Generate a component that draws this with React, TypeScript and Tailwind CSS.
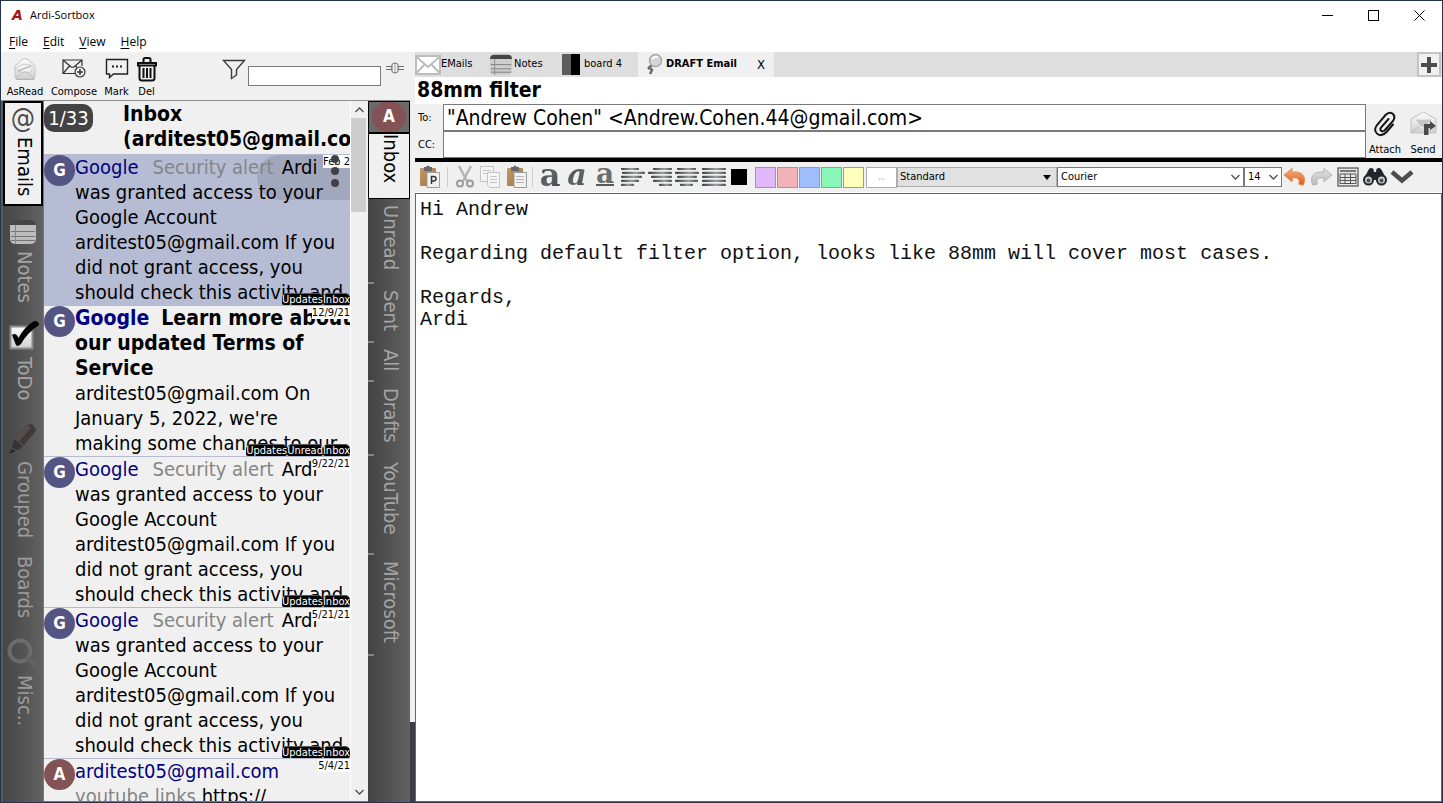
import React from "react";

const UI = "font-['DejaVu_Sans_Condensed','DejaVu_Sans',sans-serif]";

const SvgDefs = () => (
  <svg width="0" height="0" className="absolute" aria-hidden="true">
    <defs>
      <linearGradient id="paper" x1="0" y1="0" x2="0" y2="1">
        <stop offset="0" stopColor="#fdfdfd" />
        <stop offset="1" stopColor="#cfcfcf" />
      </linearGradient>
      <linearGradient id="bar" x1="0" y1="0" x2="1" y2="0">
        <stop offset="0" stopColor="#3c3f3f" />
        <stop offset="0.6" stopColor="#9da0a0" />
        <stop offset="1" stopColor="#4c4f4f" />
      </linearGradient>
      <linearGradient id="wood" x1="0" y1="0" x2="1" y2="1">
        <stop offset="0" stopColor="#c59a62" />
        <stop offset="1" stopColor="#9c7440" />
      </linearGradient>
      <linearGradient id="undo" x1="0" y1="0" x2="0" y2="1">
        <stop offset="0" stopColor="#f6b27a" />
        <stop offset="1" stopColor="#dd5a1c" />
      </linearGradient>
      <linearGradient id="redo" x1="0" y1="0" x2="0" y2="1">
        <stop offset="0" stopColor="#e2e2e2" />
        <stop offset="1" stopColor="#b9b9b9" />
      </linearGradient>
    </defs>
  </svg>
);

const AsReadIcon = () => (
  <svg width="24" height="24" viewBox="0 0 24 24" fill="none">
    <path d="M2 9 L9 2.500 Q12 1 15 2.500 L22 9 V20 Q22 22 20 22 H4 Q2 22 2 20Z" fill="url(#paper)" stroke="#c4c4c4" />
    <path d="M4.500 10 Q12 5 19.500 9 L18 15 Q12 17 5 14Z" fill="#f2f2f2" stroke="#cfcfcf" />
    <path d="M5 14 Q10 12 18 9" stroke="#bdbdbd" strokeWidth="1.500" />
    <path d="M3 21 L9 15.500 Q12 14 15 15.500 L21 21" stroke="#bcbcbc" />
    <path d="M3 22.500 H21" stroke="#b4b4b4" />
  </svg>
);

const ComposeIcon = () => (
  <svg width="24" height="24" viewBox="0 0 24 24" fill="none" stroke="#333" strokeWidth="1.200">
    <path d="M14 16.500 H1 V3 H20 V9" />
    <path d="M1 3 L8.500 9.500 Q10.500 11 12.500 9.500 L20 3 M1 16.500 L7.500 9 M13.500 9 L15 10.500" />
    <circle cx="18" cy="15" r="5" />
    <path d="M18 12 V18 M15 15 H21" strokeWidth="1.500" />
  </svg>
);

const MarkIcon = () => (
  <svg width="24" height="24" viewBox="0 0 24 24" fill="none" stroke="#1f1f1f" strokeWidth="1.400">
    <path d="M1.500 2.500 H22.500 V17 H8.500 L4.500 20.500 V17 H1.500Z" />
    <path d="M7 9.500 h2 M11 9.500 h2 M15 9.500 h2" strokeWidth="2" />
  </svg>
);

const TrashIcon = () => (
  <svg width="22" height="26" viewBox="0 0 22 26" fill="none" stroke="#111">
    <path d="M2 7 H20 V9.500 H2Z M3.500 9.500 V22 Q3.500 24.500 6 24.500 H16 Q18.500 24.500 18.500 22 V9.500" strokeWidth="2" />
    <path d="M7.500 6 V3.500 Q7.500 2 9 2 H13 Q14.500 2 14.500 3.500 V6" strokeWidth="2" />
    <path d="M7.500 12 V22 M11 12 V22 M14.500 12 V22" strokeWidth="2" />
  </svg>
);

const FunnelIcon = () => (
  <svg width="24" height="21" viewBox="0 0 24 21" fill="none" stroke="#3a3a3a" strokeWidth="1.400">
    <path d="M1.500 1.500 H22.500 L14.500 10.500 V16 L9.500 19.500 V10.500Z" />
  </svg>
);

const SliderIcon = () => (
  <svg width="18" height="12" viewBox="0 0 18 12" fill="none" stroke="#6e6e6e">
    <path d="M0 4.500 H6 V7.500 H0 M18 4.500 H12 V7.500 H18" />
    <rect x="6" y="1.500" width="6" height="9" rx="1.500" fill="#f4f4f4" />
    <path d="M9 0 V12" stroke="#999" />
  </svg>
);

const NotesIcon = ({ dim = false }: { dim?: boolean }) => (
  <svg width={dim ? 26 : 22} height={dim ? 26 : 22} viewBox="0 0 26 26" fill="none">
    <rect x="0" y="1" width="26" height="24" rx="5" fill={dim ? "#bcbcbc" : "#cdcdcd"} />
    <path d="M0 6 Q0 1 5 1 H21 Q26 1 26 6Z" fill="#454545" />
    <path d="M1 12.500 H25 M1 17.500 H25 M1 21.500 H25" stroke="#757575" />
    <path d="M5.500 6 V25" stroke="#858585" />
  </svg>
);

const TodoIcon = () => (
  <svg width="32" height="30" viewBox="0 0 32 30" fill="none">
    <rect x="3.500" y="5.500" width="22" height="22" fill="url(#paper)" stroke="#8b8b8b" strokeWidth="2" />
    <path d="M5 14 Q9 11 11.500 17 Q17 6 27 0 Q32 0 32 4 Q20 12 14 23 Q10 27 8.500 23Z" fill="#050505" />
  </svg>
);

const MarkerIcon = () => (
  <svg width="28" height="32" viewBox="0 0 28 32">
    <path d="M18 2 L23 1 L27 6 L26 9 L15 22 L6 15Z" fill="#3f3a39" />
    <path d="M5 16 L14 23 L9 27 L3 25Z" fill="#393433" />
    <path d="M2.500 26 L7 28 L0 31Z" fill="#2c2827" />
    <path d="M18 2 L22 5 L10 18 L6 15Z" fill="#544e4c" />
  </svg>
);

const MiscIcon = () => (
  <svg width="32" height="32" viewBox="0 0 32 32" fill="none">
    <circle cx="13" cy="14" r="10.500" stroke="#6b6b6b" strokeWidth="4" />
    <path d="M20 21 L30 30" stroke="#626262" strokeWidth="5" />
  </svg>
);

const EnvelopeIcon = () => (
  <svg width="26" height="20" viewBox="0 0 26 20" fill="#fff" stroke="#bcbcbc" strokeWidth="2">
    <rect x="1" y="1" width="24" height="18" />
    <path d="M1 1.500 L13 12 L25 1.500 M1 18.500 L9.500 9.500 M25 18.500 L16.500 9.500" fill="none" />
  </svg>
);

const MagnifierIcon = () => (
  <svg width="18" height="24" viewBox="0 0 18 24" fill="none">
    <path d="M6.500 11.500 L2 15.500 Q5 14.500 6 17 L4 21" stroke="#6c6c6c" strokeWidth="2.500" />
    <circle cx="9.500" cy="7.500" r="6" fill="#d6d6d6" stroke="#a8a8a8" strokeWidth="1.500" />
    <path d="M6 6 Q8 3 12 4" stroke="#fff" strokeWidth="2" />
  </svg>
);

const ClipIcon = () => (
  <svg width="24" height="26" viewBox="0 0 24 26" fill="none" stroke="#151515" strokeWidth="2" strokeLinecap="round">
    <path d="M15.500 8 L8 16.500 Q6.500 19 8.500 20 Q10.500 21 12 19 L20 10 Q23 5.500 19.500 2.500 Q16 0.500 12.500 4 L4 14 Q0 19.500 4.500 23 Q9 26 13.500 21 L20 13.500" />
  </svg>
);

const SendIcon = () => (
  <svg width="27" height="26" viewBox="0 0 27 26" fill="none">
    <path d="M1 8 L13.500 1 L26 8 V22 H1Z" fill="url(#paper)" stroke="#c2c2c2" />
    <path d="M4 8 H23 L16 16 Q13.500 18 11 16Z" fill="#c6c6c6" stroke="#f5f5f5" />
    <path d="M1 22 L10 14.500" stroke="#bdbdbd" />
    <path d="M14 24 V13 H20 V10 L26 15 L20 19 V17 H18.500 V24Z" fill="#4a4a4a" />
  </svg>
);

const PasteIcon = ({ letter = false }: { letter?: boolean }) => (
  <svg width="22" height="24" viewBox="0 0 22 24">
    <rect x="1" y="3" width="16" height="18" rx="1" fill="url(#wood)" />
    <path d="M5 2 H7 Q9 -1 11 2 H13 V6 H5Z" fill="#68686a" />
    <path d="M8 7.500 H20.500 V22.500 H8Z" fill="#f1f1f1" stroke="#9d9d9d" />
    {letter ? (
      <path d="M12.500 19 V11.500 H14.500 Q17 11.500 17 13.700 Q17 16 14.500 16 H12.500" fill="none" stroke="#303030" strokeWidth="1.500" />
    ) : (
      <path d="M10 11.500 H18 M10 14.500 H18 M10 17.500 H18" stroke="#b5b5b5" />
    )}
  </svg>
);

const CutIcon = () => (
  <svg width="18" height="24" viewBox="0 0 18 24" fill="none">
    <path d="M3 1 L11 16 M15 1 L7 16" stroke="#b4b4b4" strokeWidth="2.500" />
    <circle cx="4" cy="18.500" r="3" stroke="#9c9c9c" strokeWidth="2" />
    <circle cx="14" cy="18.500" r="3" stroke="#9c9c9c" strokeWidth="2" />
  </svg>
);

const CopyIcon = () => (
  <svg width="22" height="24" viewBox="0 0 22 24" fill="#f4f4f4" stroke="#c4c4c4">
    <rect x="1.500" y="1.500" width="13" height="15" />
    <path d="M4 5.500 H12 M4 8.500 H12" />
    <path d="M8.500 7.500 H20.500 V22.500 H11 L8.500 20Z" />
    <path d="M11 11.500 H18 M11 14.500 H18 M11 17.500 H18" />
  </svg>
);

const AlignIcon = ({ rows }: { rows: number[][] }) => (
  <svg width="24" height="18" viewBox="0 0 24 18">
    {rows.map(([x, w], i) => (
      <rect key={i} x={x} y={i * 4 - 0.25} width={w} height="2.300" rx="1" fill="url(#bar)" />
    ))}
  </svg>
);

const ArrowIcon = ({ flip = false }: { flip?: boolean }) => (
  <svg width="23" height="20" viewBox="0 0 24 20">
    <path
      transform={flip ? "translate(24 0) scale(-1 1)" : undefined}
      d="M1 8 L9.500 1 V5 Q19 3.500 22 10 Q23.500 15 21 18.500 L16.500 17.500 Q18 12 14 11 Q12 10.500 9.500 11 V15Z"
      fill={flip ? "url(#redo)" : "url(#undo)"}
      stroke={flip ? "#b4b4b4" : "#e08a55"}
    />
  </svg>
);

const TableIcon = () => (
  <svg width="22" height="20" viewBox="0 0 22 20" fill="none">
    <rect x="1" y="1" width="20" height="18" fill="#e6e6e6" stroke="#6e6e6e" strokeWidth="1.500" />
    <path d="M3 4 H19" stroke="#555" strokeWidth="1.500" />
    <path d="M3 7 H19 V16.500 H3Z M3 10.500 H19 M3 13.500 H19 M8 7 V16.500 M13.500 7 V16.500" stroke="#555" />
  </svg>
);

const BinocularsIcon = () => (
  <svg width="26" height="20" viewBox="0 0 26 20">
    <path d="M7 2 Q9 0 11.500 2 L12 5 H14 L14.500 2 Q17 0 19 2 L24.500 12 H1.500Z" fill="#22262a" />
    <circle cx="6.500" cy="13" r="5.500" fill="#22262a" />
    <circle cx="19.500" cy="13" r="5.500" fill="#22262a" />
    <circle cx="6.500" cy="13" r="3.500" fill="#c9cdd0" />
    <circle cx="19.500" cy="13" r="3.500" fill="#c9cdd0" />
    <circle cx="6.500" cy="13.500" r="2" fill="#4b5054" />
    <circle cx="19.500" cy="13.500" r="2" fill="#4b5054" />
    <rect x="10" y="7" width="6" height="6" fill="#22262a" />
  </svg>
);

const ThickChevron = () => (
  <svg width="24" height="14" viewBox="0 0 24 14" fill="none" stroke="#4d4d4d" strokeWidth="4.500">
    <path d="M2 2 L12 10.500 L22 2" />
  </svg>
);

const ThinChevron = ({ up = false }: { up?: boolean }) => (
  <svg width="9" height="6" viewBox="0 0 9 6" fill="none" stroke="#4f4f4f" strokeWidth="1.300">
    <path d={up ? "M0.500 5 L4.500 1 L8.500 5" : "M0.500 1 L4.500 5 L8.500 1"} />
  </svg>
);

const TitleBar = () => (
  <header className="bg-white font-['Open_Sans','Noto_Sans',sans-serif] text-xs text-black">
    <div className="flex h-[29px] items-center">
      <span className="w-[29px] pl-[11px] font-['DejaVu_Sans',sans-serif] text-[14px] font-bold italic text-[#a81414]">A</span>
      <h1 className="flex-1 text-[11px]">Ardi-Sortbox</h1>
      <button aria-label="Minimize" className="flex w-[46px] justify-center">
        <svg width="11" height="11" stroke="#000"><path d="M0 5.500 H11" /></svg>
      </button>
      <button aria-label="Maximize" className="flex w-[46px] justify-center">
        <svg width="11" height="11" stroke="#000" fill="none"><rect x="0.500" y="0.500" width="10" height="10" /></svg>
      </button>
      <button aria-label="Close" className="flex w-[46px] justify-center">
        <svg width="11" height="11" stroke="#000"><path d="M0.500 0.500 L10.500 10.500 M10.500 0.500 L0.500 10.500" /></svg>
      </button>
    </div>
    <nav className="flex h-[22px] items-center gap-[15px] pl-2 pt-0.5 text-xs">
      {["File", "Edit", "View", "Help"].map((m) => (
        <button key={m}>
          <span className="underline underline-offset-2">{m[0]}</span>
          {m.slice(1)}
        </button>
      ))}
    </nav>
  </header>
);

const ToolButton = ({ label, children, className }: { label: string; children: React.ReactNode; className: string }) => (
  <button className={`flex flex-col items-center text-[11px] leading-[18px] ${className}`}>
    <span className="flex h-7 items-center">{children}</span>
    {label}
  </button>
);

const LeftToolbar = () => (
  <div className="flex h-[49px] items-start border-b border-[#8b8b8b] bg-[#f0f0f0] pt-[3px]">
    <ToolButton label="AsRead" className="w-[48px]"><AsReadIcon /></ToolButton>
    <ToolButton label="Compose" className="w-[50px]"><ComposeIcon /></ToolButton>
    <ToolButton label="Mark" className="w-[35px]"><MarkIcon /></ToolButton>
    <ToolButton label="Del" className="w-[25px]"><TrashIcon /></ToolButton>
    <div className="flex flex-1 items-start justify-end pt-1">
      <FunnelIcon />
      <input aria-label="Filter messages" className="ml-0.5 mt-[7px] h-5 w-[133px] border border-[#7a7a7a] bg-white px-1 text-[11px]" />
      <button aria-label="Filter options" className="ml-[5px] mr-1.5 mt-[3px]"><SliderIcon /></button>
    </div>
  </div>
);

const SIDE = [
  { label: "Notes", icon: <NotesIcon dim />, cls: "h-[106px] pt-[13px] text-[#a5a5a5]" },
  { label: "ToDo", icon: <TodoIcon />, cls: "h-[108px] pt-[9px] text-[#a5a5a5]" },
  { label: "Grouped", icon: <MarkerIcon />, cls: "h-[126px] pt-[3px] text-[#9c9c9c]" },
  { label: "Boards", icon: null, cls: "h-[86px] pt-[10px] text-[#9c9c9c]" },
  { label: "Misc..", icon: <MiscIcon />, cls: "h-[110px] pt-[5px] text-[#9c9c9c]" },
];

const SideNav = () => (
  <nav className="flex w-[42px] shrink-0 flex-col border-l-2 border-[#5a5a5a] bg-linear-to-r from-[#454545] to-[#626262] text-[20px]">
    <button className="flex h-[105px] flex-col items-center border-2 border-black bg-[#f0f0f0] text-black">
      <span className="text-[27px] leading-[30px] text-[#4a4a4a]">@</span>
      <span className="ml-1 mt-1 leading-6 [writing-mode:vertical-rl]">Emails</span>
    </button>
    {SIDE.map((s) => (
      <button key={s.label} className={`flex shrink-0 flex-col items-center gap-1.5 ${s.cls}`}>
        {s.icon}
        <span className="ml-1 leading-6 [writing-mode:vertical-rl]">{s.label}</span>
      </button>
    ))}
  </nav>
);

const FOLDERS = [
  { label: "Unread", cls: "h-[85px]" },
  { label: "Sent", cls: "h-[59px]" },
  { label: "All", cls: "h-[39px]" },
  { label: "Drafts", cls: "h-[74px]" },
  { label: "YouTube", cls: "h-[99px]" },
  { label: "Microsoft", cls: "h-[101px]" },
];

const FolderTabs = () => (
  <nav className="flex w-[42px] shrink-0 flex-col bg-linear-to-r from-[#434343] to-[#626262] text-[20px] text-[#a5a5a5]">
    <button aria-label="Account A" className="flex h-8 items-center justify-center border border-black bg-[#6b6b6b]">
      <span className="flex h-[30px] w-[34px] items-center justify-center rounded-full bg-[#835254] text-[17px] font-bold text-white">A</span>
    </button>
    <button className="flex h-[66px] items-start justify-center border border-black bg-[#f0f0f0] pl-1 text-black">
      <span className="leading-6 [writing-mode:vertical-rl]">Inbox</span>
    </button>
    {FOLDERS.map((f) => (
      <button key={f.label} className={`flex shrink-0 flex-col ${f.cls}`}>
        <span className="ml-1 flex-1 self-center pt-[6px] text-left leading-6 [writing-mode:vertical-rl]">{f.label}</span>
        <span className="h-0.5 w-1.5 bg-[#858585]" />
      </button>
    ))}
  </nav>
);

interface Mail {
  initial: string;
  sender: string;
  subject: string;
  lines: React.ReactNode[];
  date: string;
  tags: string[];
  unread?: boolean;
  selected?: boolean;
}

const ALERT_LINES = [
  "was granted access to your",
  "Google Account",
  "arditest05@gmail.com If you",
  "did not grant access, you",
  "should check this activity and",
];

const alertMail = (date: string, selected = false): Mail => ({
  initial: "G", sender: "Google", subject: "Security alert", lines: ["Ardi", ...ALERT_LINES], date, tags: ["Updates", "Inbox"], selected,
});

const Strong = ({ children }: { children: React.ReactNode }) => <b className="text-[21px] leading-none">{children}</b>;

const MAILS: Mail[] = [
  alertMail("Feb 2", true),
  {
    initial: "G", sender: "Google", subject: "", date: "12/9/21", tags: ["Updates", "Unread", "Inbox"], unread: true,
    lines: [
      <Strong>Learn more about</Strong>, <Strong>our updated Terms of</Strong>, <Strong>Service</Strong>,
      "arditest05@gmail.com On", "January 5, 2022, we're", "making some changes to our",
    ],
  },
  alertMail("9/22/21"),
  alertMail("5/21/21"),
];

const Avatar = ({ letter, cls }: { letter: string; cls: string }) => (
  <span className={`flex h-[31px] w-[31px] shrink-0 items-center justify-center rounded-full text-[17px] font-bold text-white ${cls}`}>{letter}</span>
);

const DateLabel = ({ children }: { children: React.ReactNode }) => (
  <time className="absolute right-0 top-0 bg-white text-[11px] leading-[13px] text-black">{children}</time>
);

const MailRow = ({ mail }: { mail: Mail }) => (
  <li className={`relative flex h-[151px] shrink-0 border-t border-[#b5bbd1] ${mail.selected ? "bg-[#b5bcd3]" : ""}`}>
    {mail.selected && <span className="absolute right-0 top-0 h-[45px] w-[93px] rounded-l-full bg-[#a1a8be]" />}
    <Avatar letter={mail.initial} cls="bg-[#555584]" />
    <p className="relative whitespace-nowrap">
      <span className={`text-[#000080] ${mail.unread ? "text-[21px] font-bold leading-none" : ""}`}>{mail.sender}</span>
      {mail.subject && <span className="pl-3.5 text-[#858585]">{mail.subject}</span>}
      <span className={mail.subject ? "pl-2" : "pl-3"}>{mail.lines[0]}</span>
      {mail.lines.slice(1).map((l, i) => (
        <span key={i} className="block">{l}</span>
      ))}
    </p>
    <DateLabel>{mail.date}</DateLabel>
    {mail.selected && (
      <button aria-label="Message actions" className="absolute right-[11px] top-0 flex flex-col gap-1">
        <i className="h-2 w-2 rounded-full bg-[#404045]" />
        <i className="h-2 w-2 rounded-full bg-[#404045]" />
        <i className="h-2 w-2 rounded-full bg-[#404045]" />
      </button>
    )}
    <span className="absolute bottom-0 right-0 flex text-[11px] leading-[11px] text-white">
      {mail.tags.map((t) => (
        <span key={t} className="rounded-t-[5px] rounded-b-[2px] border-t border-[#555] bg-black">{t}</span>
      ))}
    </span>
  </li>
);

const MessageList = () => (
  <section className="flex min-w-0 flex-1 overflow-hidden border-b border-l border-[#777] bg-[#f0f0f0]">
    <div className="flex min-w-0 flex-1 flex-col overflow-hidden text-[20px] leading-[25px] text-black">
      <div className="flex h-[53px] shrink-0 items-start">
        <span className="mt-[3px] flex h-7 w-[49px] shrink-0 items-center justify-center rounded-[10px] bg-[#434343] text-white">1/33</span>
        <h2 className="ml-[30px] mt-px whitespace-nowrap text-[21px] font-bold">
          Inbox
          <br />
          (arditest05@gmail.co
        </h2>
      </div>
      <ul className="flex flex-col">
        {MAILS.map((m) => (
          <MailRow key={m.date} mail={m} />
        ))}
        <li className="relative flex shrink-0 border-t border-[#b5bbd1]">
          <Avatar letter="A" cls="bg-[#835254]" />
          <p className="whitespace-nowrap">
            <span className="text-[#000080]">arditest05@gmail.com</span>
            <br />
            <span className="text-[#858585]">youtube links</span> https://
          </p>
          <DateLabel>5/4/21</DateLabel>
        </li>
      </ul>
    </div>
    <div className="flex w-[18px] shrink-0 flex-col items-center justify-between border-l border-white bg-[#f0f0f0] pb-1.5">
      <div className="flex w-full flex-col items-center">
        <span className="flex h-[17px] items-center"><ThinChevron up /></span>
        <span className="h-[94px] w-[15px] self-start bg-[#cdcdcd]" />
      </div>
      <ThinChevron />
    </div>
  </section>
);

const TabStrip = () => (
  <div className="flex h-[25px] items-stretch bg-[#dedede] text-[11px] text-black">
    <button className="flex w-[75px] items-center"><EnvelopeIcon />EMails</button>
    <button className="flex w-[72px] items-center gap-0.5"><NotesIcon />Notes</button>
    <button className="flex w-[76px] items-center gap-1">
      <svg width="18" height="21"><rect width="9" height="21" fill="#5c5c5c" /><rect x="9" width="9" height="21" fill="#000" /></svg>
      board 4
    </button>
    <div className="flex w-[136px] items-center bg-[#f0f0f0] pl-2">
      <button className="flex flex-1 items-center gap-0.5 font-bold"><MagnifierIcon />DRAFT Email</button>
      <button aria-label="Close tab" className="mr-[9px] text-[13px]">X</button>
    </div>
    <button aria-label="New tab" className="ml-auto mr-px flex w-6 items-center justify-center border-2 border-[#c4c4c4] bg-[#f0f0f0]">
      <svg width="16" height="16" stroke="#4d4d4d" strokeWidth="4"><path d="M8 0 V16 M0 8 H16" /></svg>
    </button>
  </div>
);

const Recipients = () => (
  <div className="flex h-[54px] bg-[#f0f0f0] text-[11px]">
    <div className="flex flex-1 flex-col">
      <label className="flex h-[27px] items-center">
        <span className="w-7 pl-[3px] pt-0.5">To:</span>
        <input
          defaultValue={'"Andrew Cohen" <Andrew.Cohen.44@gmail.com>'}
          className="h-full flex-1 border border-[#7a7a7a] bg-white px-[3px] text-[21px] outline-none"
        />
      </label>
      <label className="flex h-[27px] items-center">
        <span className="w-7 pl-[3px] pt-0.5">CC:</span>
        <input className="h-full flex-1 border border-[#7a7a7a] bg-white px-[3px] text-[21px] outline-none" />
      </label>
    </div>
    <button className="flex w-[38px] flex-col items-center justify-between pt-[7px]">
      <ClipIcon />Attach
    </button>
    <button className="flex w-[38px] flex-col items-center justify-between pt-[7px]">
      <SendIcon />Send
    </button>
  </div>
);

const Glyph = ({ label, cls }: { label: string; cls: string }) => (
  <button
    aria-label={label}
    className={`flex h-[30px] items-center justify-center bg-linear-to-br from-[#2f3434] via-[#5f6464] to-[#3b4040] bg-clip-text pb-1 font-['DejaVu_Serif',serif] font-bold leading-[26px] text-transparent ${cls}`}
  >
    a
  </button>
);

const SWATCHES = ["bg-[#e1b9fb]", "bg-[#f1b3b8]", "bg-[#9fbdfd]", "bg-[#89f5b6]", "bg-[#ffffbd]"];
const ALIGNS = [
  { label: "Align left", rows: [[0, 18], [1, 23], [0, 21], [0, 18], [0, 13]] },
  { label: "Align right", rows: [[5, 19], [0, 24], [3, 21], [5, 19], [11, 13]] },
  { label: "Align center", rows: [[2, 19], [0, 24], [2, 20], [0, 23], [5, 13]] },
  { label: "Justify", rows: [[0, 24], [0, 24], [0, 24], [0, 24], [0, 24]] },
];

const FormatBar = () => (
  <div className="flex h-[30px] items-center bg-[#f0f0f0] pl-1 text-[11px]">
    <button aria-label="Paste plain"><PasteIcon letter /></button>
    <span className="ml-1.5 h-5 w-px bg-[#cfcfcf]" />
    <div className="ml-2 flex items-center gap-[5px]">
      <button aria-label="Cut"><CutIcon /></button>
      <button aria-label="Copy"><CopyIcon /></button>
      <button aria-label="Paste"><PasteIcon /></button>
    </div>
    <span className="ml-1 h-5 w-px bg-[#cfcfcf]" />
    <div className="ml-1.5 flex items-center">
      <Glyph label="Bold" cls="w-[22px] text-[32px]" />
      <Glyph label="Italic" cls="w-8 text-[30px] italic" />
      <button aria-label="Underline" className="flex h-[26px] w-6 flex-col items-center justify-end pb-1 font-['DejaVu_Serif',serif] text-[28px] font-bold leading-[20px] text-[#6a6f6f]">
        a
        <span className="h-0.5 w-[18px] shrink-0 bg-[#555a5a]" />
      </button>
    </div>
    <div className="ml-1 flex items-center gap-[3px]">
      {ALIGNS.map((a) => (
        <button key={a.label} aria-label={a.label}><AlignIcon rows={a.rows} /></button>
      ))}
    </div>
    <button aria-label="Text colour black" className="ml-[5px] h-4 w-4 bg-black" />
    <div className="ml-2 flex gap-px">
      {SWATCHES.map((s) => (
        <button key={s} aria-label="Highlight colour" className={`h-[21px] w-[21px] border border-[#9b9b9b] ${s}`} />
      ))}
    </div>
    <button aria-label="More colours" className="ml-0.5 h-[21px] w-[31px] border border-[#adadad] bg-white text-[#999]">..</button>
    <div className="relative">
      <select aria-label="Paragraph style" className="block h-5 w-40 appearance-none border border-[#adadad] bg-[#e1e1e1] px-0.5">
        <option>Standard</option>
      </select>
      <svg width="8" height="5" className="pointer-events-none absolute right-1.5 top-2"><path d="M0 0 H8 L4 5Z" /></svg>
    </div>
    <div className="relative">
      <select aria-label="Font" className="block h-5 w-[187px] appearance-none border border-[#7a7a7a] bg-white px-[3px]">
        <option>Courier</option>
      </select>
      <span className="pointer-events-none absolute right-1 top-[7px]"><ThinChevron /></span>
    </div>
    <div className="relative">
      <select aria-label="Font size" className="block h-5 w-[38px] appearance-none border border-[#7a7a7a] bg-white px-[3px]">
        <option>14</option>
      </select>
      <span className="pointer-events-none absolute right-1 top-[7px]"><ThinChevron /></span>
    </div>
    <div className="ml-px flex items-center gap-1">
      <button aria-label="Undo"><ArrowIcon /></button>
      <button aria-label="Redo"><ArrowIcon flip /></button>
    </div>
    <button aria-label="Insert table" className="ml-1"><TableIcon /></button>
    <button aria-label="Find" className="ml-[3px]"><BinocularsIcon /></button>
    <button aria-label="More tools" className="ml-0.5"><ThickChevron /></button>
  </div>
);

const BODY = `Hi Andrew

Regarding default filter option, looks like 88mm will cover most cases.

Regards,
Ardi`;

export default function App() {
  return (
    <div className={`flex h-screen flex-col overflow-hidden border border-[#23344f] bg-white text-black ${UI}`}>
      <SvgDefs />
      <TitleBar />
      <div className="flex min-h-0 flex-1">
        <aside className="flex w-[409px] shrink-0 flex-col">
          <LeftToolbar />
          <div className="flex min-h-0 flex-1">
            <SideNav />
            <MessageList />
            <FolderTabs />
          </div>
        </aside>
        <div className="flex w-[5px] shrink-0 flex-col justify-end bg-[#f0f0f0]">
          <span className="h-20 bg-[#3a3d45]" />
        </div>
        <main className="flex min-w-0 flex-1 flex-col">
          <TabStrip />
          <h2 className="h-[27px] bg-white pl-0.5 text-[21px] font-bold leading-[27px]">88mm filter</h2>
          <Recipients />
          <div className="h-1 shrink-0 bg-black" />
          <FormatBar />
          <textarea
            aria-label="Message body"
            defaultValue={BODY}
            className="mt-px min-h-0 flex-1 resize-none border border-[#1f7ab0] bg-white px-1 pt-[5px] font-['Liberation_Mono',monospace] text-[20px] leading-[22px] text-[#111] outline-none"
          />
        </main>
      </div>
    </div>
  );
}
